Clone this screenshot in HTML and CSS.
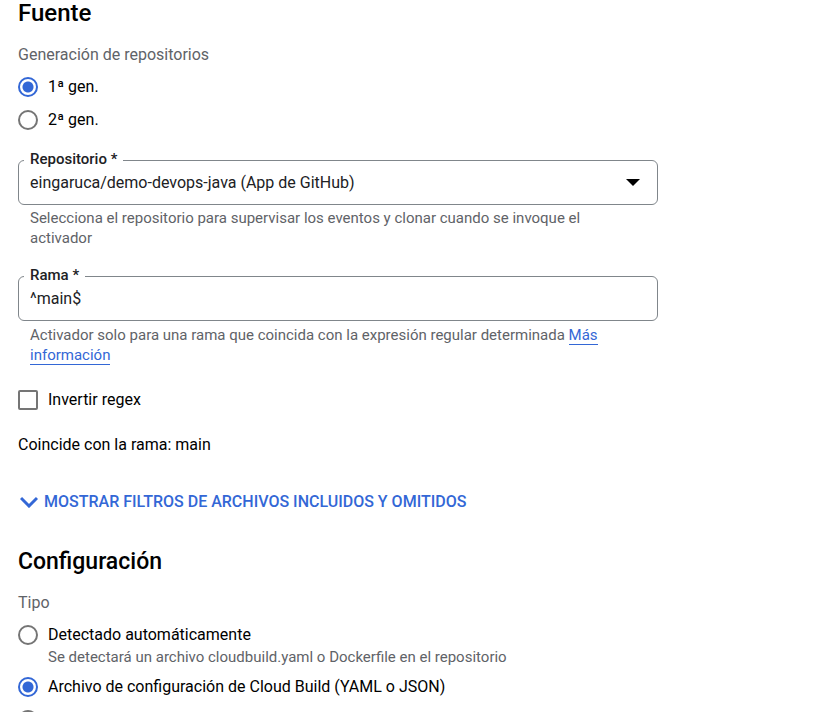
FILE: index.html
```html
<!DOCTYPE html>
<html lang="es">
<head>
<meta charset="utf-8">
<meta name="viewport" content="width=device-width, initial-scale=1">
<title>Activador</title>
<link rel="stylesheet" href="styles.css">
</head>
<body>
<main class="page">
  <form class="form">
    <section class="source">
      <h2 class="heading heading-main">Fuente</h2>
      <fieldset class="group">
        <legend class="group-title">Generación de repositorios</legend>
        <label class="choice"><input class="radio" type="radio" name="gen" checked><span>1ª gen.</span></label>
        <label class="choice"><input class="radio" type="radio" name="gen"><span>2ª gen.</span></label>
      </fieldset>

      <div class="field">
        <div class="control">
          <label class="field-label" for="repo">Repositorio *</label>
          <select class="input" id="repo">
            <option>eingaruca/demo-devops-java (App de GitHub)</option>
          </select>
          <svg class="arrow" viewBox="0 0 14 7" aria-hidden="true"><path d="M0 0h14L7 7z"/></svg>
        </div>
        <p class="hint">Selecciona el repositorio para supervisar los eventos y clonar cuando se invoque el activador</p>
      </div>

      <div class="field">
        <div class="control">
          <label class="field-label" for="branch">Rama *</label>
          <input class="input" id="branch" type="text" value="^main$">
        </div>
        <p class="hint hint-spaced">Activador solo para una rama que coincida con la expresión regular determinada <a class="link" href="#">Más información</a></p>
      </div>

      <label class="choice"><input class="checkbox" type="checkbox"><span>Invertir regex</span></label>
      <p class="match">Coincide con la rama: main</p>
      <button class="expander" type="button">
        <svg class="chevron" viewBox="0 0 18 12" aria-hidden="true"><path d="M1 2l8 8 8-8"/></svg>
        <span>MOSTRAR FILTROS DE ARCHIVOS INCLUIDOS Y OMITIDOS</span>
      </button>
    </section>

    <section>
      <h2 class="heading">Configuración</h2>
      <fieldset class="group">
        <legend class="group-title">Tipo</legend>
        <label class="choice" for="auto"><input class="radio" id="auto" type="radio" name="type" aria-describedby="auto-hint"><span>Detectado automáticamente</span></label>
        <p class="choice-hint" id="auto-hint">Se detectará un archivo cloudbuild.yaml o Dockerfile en el repositorio</p>
        <label class="choice"><input class="radio" type="radio" name="type" checked><span>Archivo de configuración de Cloud Build (YAML o JSON)</span></label>
        <label class="choice"><input class="radio" type="radio" name="type" aria-label="Dockerfile"></label>
      </fieldset>
    </section>
  </form>
</main>
</body>
</html>
```
FILE: styles.css
```css
* {
  box-sizing: border-box;
}

body {
  margin: 0;
  background: #fff;
  color: #000;
  font: 16px/20px Roboto, sans-serif;
}

.page {
  height: 100vh;
  overflow: hidden;
  padding: 1px 18px 0;
}

.form {
  max-width: 640px;
}

.heading {
  margin: 0 0 19px;
  font-size: 23px;
  font-weight: 500;
  line-height: 24px;
}

.heading-main {
  margin-bottom: 20px;
  font-size: 24px;
}

.group {
  min-width: 0;
  margin: 0;
  padding: 0;
  border: 0;
}

.group-title {
  padding: 0;
  margin-bottom: 12px;
  color: #5f6368;
}

.choice {
  display: flex;
  align-items: center;
  gap: 10px;
  min-height: 20px;
}

.choice + .choice {
  margin-top: 13px;
}

.radio,
.checkbox {
  appearance: none;
  flex: none;
  width: 20px;
  height: 20px;
  margin: 0;
  border: 2px solid #757575;
  background: #fff;
}

.radio {
  border-radius: 50%;
}

.radio:checked {
  border-color: #3367d6;
  background: radial-gradient(circle, #3367d6 5px, #fff 6px);
}

.checkbox {
  border-radius: 2px;
}

.field {
  margin-top: 28px;
}

.source .group + .field {
  margin-top: 30px;
}

.control {
  position: relative;
}

.field-label {
  position: absolute;
  top: -11px;
  left: 6px;
  padding: 0 6px;
  background: #fff;
  color: #202124;
  font-size: 15px;
  font-weight: 500;
}

.input {
  appearance: none;
  display: block;
  width: 100%;
  height: 45px;
  margin: 0;
  padding: 0 11px;
  border: 1px solid #80868b;
  border-radius: 6px;
  background: #fff;
  color: #202124;
  font: inherit;
}

.arrow {
  position: absolute;
  top: 19px;
  right: 18px;
  width: 14px;
  height: 7px;
  pointer-events: none;
}

.hint,
.choice-hint {
  margin: 3px 0 0;
  color: #5f6368;
  font-size: 15px;
}

.hint {
  padding: 0 36px 0 12px;
}

.hint-spaced {
  margin: 4px 0 25px;
}

.choice-hint {
  margin: 2px 0 10px;
  padding-left: 30px;
}

.link {
  border-bottom: 1px solid #3367d6;
  color: #3367d6;
  text-decoration: none;
}

.match {
  margin: 25px 0 37px;
}

.expander {
  display: flex;
  align-items: center;
  gap: 6px;
  margin: 0 0 38px;
  padding: 0 2px;
  border: 0;
  background: none;
  color: #3367d6;
  font: inherit;
  font-weight: 500;
}

.chevron {
  width: 18px;
  height: 12px;
  fill: none;
  stroke: currentColor;
  stroke-width: 3;
}
```
